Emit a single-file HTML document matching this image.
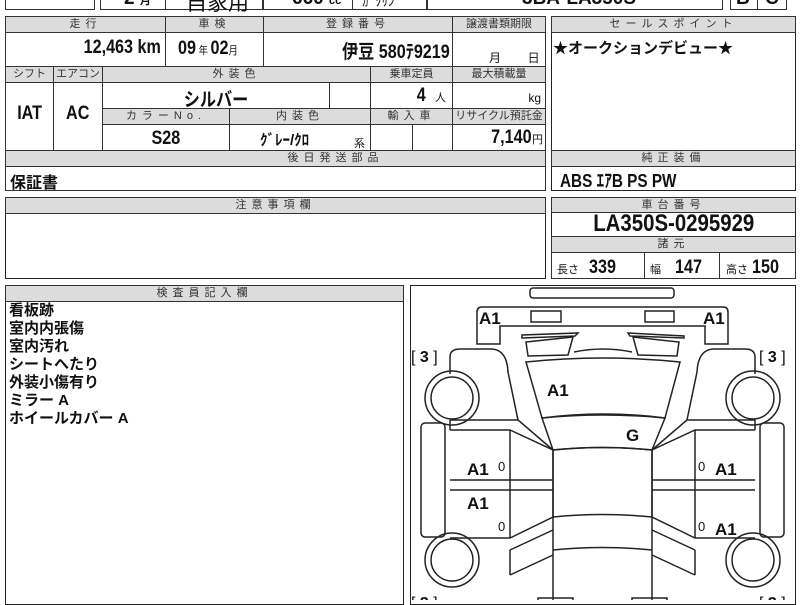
<!DOCTYPE html>
<html><head><meta charset="utf-8"><style>
*{margin:0;padding:0;box-sizing:border-box}
body{width:800px;height:600px;background:#fff;position:relative;overflow:hidden;font-family:"Liberation Sans","Noto Sans CJK JP",sans-serif;color:#111}
.b{position:absolute;border:1.5px solid #222;background:#fff}
.h{position:absolute;background:#dcdcdc;border:1px solid #333;font-size:11px;color:#333;text-align:center;letter-spacing:5px;line-height:15px;overflow:hidden;white-space:nowrap}
.c{position:absolute;border:1px solid #333;background:#fff;overflow:hidden;white-space:nowrap}
.v{font-weight:bold;font-size:19px;display:inline-block;transform:scaleX(.85)}
.s{font-size:11px}
</style></head><body>
<!-- top row -->
<div class="c" style="left:5px;top:-5px;width:90px;height:15px;border-width:1.5px"></div>
<div class="c" style="left:100px;top:-5px;width:66px;height:15px;border-width:1.5px"></div>
<div class="c" style="left:165px;top:-5px;width:98px;height:15px;border-width:1.5px"></div>
<div class="c" style="left:263px;top:-5px;width:90px;height:15px;border-width:1.5px"></div>
<div class="c" style="left:352px;top:-5px;width:75px;height:15px;border-width:1.5px"></div>
<div class="c" style="left:427px;top:-5px;width:296px;height:15px;border-width:1.5px"></div>
<div class="c" style="left:730px;top:-5px;width:28px;height:15px;border-width:1.5px"></div>
<div class="c" style="left:757px;top:-5px;width:30px;height:15px;border-width:1.5px"></div>
<div style="position:absolute;left:124px;top:-12px;font-weight:bold;font-size:19px">2 <span class="s">月</span></div>
<div style="position:absolute;left:186px;top:-13px;font-size:21px">自家用</div>
<div style="position:absolute;left:292px;top:-12px;font-weight:bold;font-size:19px">660 <span class="s">cc</span></div>
<div style="position:absolute;left:362px;top:-9px;font-size:13px">ｶﾞｿﾘﾝ</div>
<div style="position:absolute;left:522px;top:-12px;font-weight:bold;font-size:19px">3BA-LA350S</div>
<div style="position:absolute;left:736px;top:-12px;font-weight:bold;font-size:19px">B</div>
<div style="position:absolute;left:765px;top:-12px;font-weight:bold;font-size:19px">C</div>

<!-- main table -->
<div class="b" style="left:5px;top:16px;width:541px;height:175px"></div>
<div class="h" style="left:5px;top:16px;width:161px;height:17px">走行</div>
<div class="h" style="left:165px;top:16px;width:99px;height:17px">車検</div>
<div class="h" style="left:263px;top:16px;width:190px;height:17px">登録番号</div>
<div class="h" style="left:452px;top:16px;width:94px;height:17px;letter-spacing:0">譲渡書類期限</div>
<div class="c" style="left:5px;top:32px;width:161px;height:35px;text-align:right;padding-right:4px;padding-top:4px"><span class="v" style="transform-origin:right">12,463 km</span></div>
<div class="c" style="left:165px;top:32px;width:99px;height:35px;padding:5px 0 0 12px"><span class="v" style="transform-origin:left">09<span class="s" style="font-weight:normal"> 年 </span>02<span class="s" style="font-weight:normal">月</span></span></div>
<div class="c" style="left:263px;top:32px;width:190px;height:35px;text-align:right;padding:4px 2px 0 0"><span class="v" style="transform-origin:right">伊豆 580ﾃ9219</span></div>
<div class="c" style="left:452px;top:32px;width:94px;height:35px;font-size:12px;padding:16px 0 0 36px">月 &nbsp;&nbsp;&nbsp;&nbsp;&nbsp;&nbsp;&nbsp;日</div>

<div class="h" style="left:5px;top:66px;width:49px;height:17px;letter-spacing:0">シフト</div>
<div class="h" style="left:53px;top:66px;width:50px;height:17px;letter-spacing:0">エアコン</div>
<div class="h" style="left:102px;top:66px;width:269px;height:17px">外装色</div>
<div class="h" style="left:370px;top:66px;width:83px;height:17px;letter-spacing:0">乗車定員</div>
<div class="h" style="left:452px;top:66px;width:94px;height:17px;letter-spacing:0">最大積載量</div>
<div class="c" style="left:5px;top:82px;width:49px;height:69px;text-align:center;padding-top:20px"><span class="v">IAT</span></div>
<div class="c" style="left:53px;top:82px;width:50px;height:69px;text-align:center;padding-top:20px"><span class="v">AC</span></div>
<div class="c" style="left:102px;top:82px;width:228px;height:27px;text-align:center;padding-top:2px"><span class="v">シルバー</span></div>
<div class="c" style="left:329px;top:82px;width:42px;height:27px"></div>
<div class="c" style="left:370px;top:82px;width:83px;height:27px;text-align:right;padding:2px 6px 0 0"><span class="v">4</span> &nbsp;<span class="s">人</span></div>
<div class="c" style="left:452px;top:82px;width:94px;height:27px;text-align:right;padding:8px 4px 0 0;font-size:12px">kg</div>
<div class="h" style="left:102px;top:108px;width:128px;height:17px">カラーNo.</div>
<div class="h" style="left:229px;top:108px;width:142px;height:17px">内装色</div>
<div class="h" style="left:370px;top:108px;width:83px;height:17px">輸入車</div>
<div class="h" style="left:452px;top:108px;width:94px;height:17px;letter-spacing:0">リサイクル預託金</div>
<div class="c" style="left:102px;top:124px;width:128px;height:27px;text-align:center;padding-top:3px"><span class="v">S28</span></div>
<div class="c" style="left:229px;top:124px;width:142px;height:27px;padding:4px 0 0 30px;font-size:15px;font-weight:bold">ｸﾞﾚｰ/ｸﾛ <span style="font-size:11px;font-weight:normal;position:absolute;right:5px;top:10px">系</span></div>
<div class="c" style="left:370px;top:124px;width:43px;height:27px"></div>
<div class="c" style="left:412px;top:124px;width:41px;height:27px"></div>
<div class="c" style="left:452px;top:124px;width:94px;height:27px;text-align:right;padding:2px 2px 0 0"><span class="v" style="transform-origin:right">7,140</span><span class="s">円</span></div>
<div class="h" style="left:5px;top:150px;width:541px;height:17px;padding-left:120px">後日発送部品</div>
<div class="c" style="left:5px;top:166px;width:541px;height:25px;font-size:16px;font-weight:bold;padding:2px 4px">保証書</div>

<!-- sales point -->
<div class="b" style="left:551px;top:16px;width:245px;height:175px"></div>
<div class="h" style="left:551px;top:16px;width:245px;height:17px">セールスポイント</div>
<div style="position:absolute;left:553px;top:37px;font-size:15px;font-weight:bold">★オークションデビュー★</div>
<div class="h" style="left:551px;top:150px;width:245px;height:17px">純正装備</div>
<div style="position:absolute;left:560px;top:167px"><span class="v" style="transform-origin:left;font-size:18px">ABS ｴｱB PS PW</span></div>

<!-- 注意事項 -->
<div class="b" style="left:5px;top:197px;width:541px;height:82px"></div>
<div class="h" style="left:5px;top:197px;width:541px;height:17px">注意事項欄</div>

<!-- 車台番号 -->
<div class="b" style="left:551px;top:197px;width:245px;height:82px"></div>
<div class="h" style="left:551px;top:197px;width:245px;height:16px">車台番号</div>
<div style="position:absolute;left:551px;top:210px;width:245px;text-align:center"><span class="v" style="font-size:24px">LA350S-0295929</span></div>
<div class="h" style="left:551px;top:236px;width:245px;height:17px">諸元</div>
<div class="c" style="left:551px;top:252px;width:94px;height:27px;padding:4px 0 0 5px"><span class="s">長さ</span> <span class="v" style="transform-origin:left;margin-left:6px">339</span></div>
<div class="c" style="left:644px;top:252px;width:76px;height:27px;padding:4px 0 0 5px"><span class="s">幅</span> <span class="v" style="transform-origin:left;margin-left:10px">147</span></div>
<div class="c" style="left:719px;top:252px;width:77px;height:27px;padding:4px 0 0 6px"><span class="s">高さ</span> <span class="v" style="transform-origin:left">150</span></div>

<!-- 検査員 -->
<div class="b" style="left:5px;top:285px;width:399px;height:320px"></div>
<div class="h" style="left:5px;top:285px;width:399px;height:17px">検査員記入欄</div>
<div style="position:absolute;left:9px;top:302px;font-size:15px;font-weight:bold;line-height:18px">看板跡<br>室内内張傷<br>室内汚れ<br>シートへたり<br>外装小傷有り<br>ミラー A<br>ホイールカバー A</div>

<!-- diagram -->
<div class="b" style="left:410px;top:285px;width:386px;height:320px"></div>
<svg style="position:absolute;left:0;top:0" width="800" height="600" fill="none" stroke="#222" stroke-width="1.5">
<rect x="530" y="288" width="144" height="10" rx="3"/>
<path d="M477,344 L477,312 Q477,307 482,307 L723,307 Q728,307 728,312 L728,344 L705,344 L705,326 L500,326 L500,344 Z"/>
<rect x="531" y="311" width="30" height="11"/><rect x="645" y="311" width="29" height="11"/>
<path d="M522,335 L578,333 L575,336 L522,338 Z"/><path d="M628,333 L684,336 L684,338 L630,336 Z"/>
<path d="M526,342 L573,337 L568,355 L528,356 Z"/><path d="M633,337 L679,342 L677,356 L638,355 Z"/>
<path d="M574,352 Q603,346 632,352"/>
<path d="M526,362 Q603,354 680,362 L665,418 Q603,412 542,418 Z"/>
<path d="M542,418 Q603,410 665,418 L652,450 Q603,445 553,450 Z"/>
<path d="M553,450 Q603,445 652,450 L652,517 Q603,512 553,517 Z"/>
<!-- left side -->
<path d="M450,374 L450,357 Q450,349 460,349 L492,349 Q507,350 508,372 L518,420 L553,450"/>
<path d="M450,430 L510,430 L553,450 L553,517 L510,538 L450,538"/>
<path d="M510,430 L510,538"/><path d="M450,480 L553,480"/><path d="M450,490 L553,490"/>
<path d="M450,420 L450,430 M450,420 L518,420"/>
<rect x="421" y="423" width="24" height="114" rx="4"/>
<circle cx="452" cy="398" r="27"/><circle cx="452" cy="398" r="21"/>
<circle cx="452" cy="560" r="27"/><circle cx="452" cy="560" r="21"/>
<path d="M510,550 L553,530 M510,575 L553,555 M510,550 L510,575"/>
<!-- right side -->
<path d="M755,374 L755,357 Q755,349 745,349 L713,349 Q698,350 697,372 L687,420 L652,450"/>
<path d="M755,430 L695,430 L652,450 L652,517 L695,538 L755,538"/>
<path d="M695,430 L695,538"/><path d="M755,480 L652,480"/><path d="M755,490 L652,490"/>
<path d="M755,420 L755,430 M755,420 L687,420"/>
<rect x="760" y="423" width="24" height="114" rx="4"/>
<circle cx="753" cy="398" r="27"/><circle cx="753" cy="398" r="21"/>
<circle cx="753" cy="560" r="27"/><circle cx="753" cy="560" r="21"/>
<path d="M695,550 L652,530 M695,575 L652,555 M695,550 L695,575"/>
<path d="M553,517 L553,600 M652,517 L652,600 M553,550 Q603,545 652,550"/>
<rect x="538" y="598" width="35" height="10"/><rect x="632" y="598" width="35" height="10"/>
<g fill="#111" stroke="none" font-family="Liberation Sans,sans-serif" font-weight="bold" font-size="17">
<text x="479" y="324">A1</text><text x="703" y="324">A1</text>
<text x="547" y="396">A1</text><text x="626" y="441">G</text>
<text x="467" y="475">A1</text><text x="715" y="475">A1</text>
<text x="467" y="509">A1</text><text x="715" y="535">A1</text>
</g>
<g fill="#111" stroke="none" font-family="Liberation Sans,sans-serif" font-size="13">
<text x="498" y="471">0</text><text x="698" y="471">0</text>
<text x="498" y="531">0</text><text x="698" y="531">0</text>
</g>
<g fill="#111" stroke="none" font-family="Liberation Sans,sans-serif" font-size="16">
<text x="411" y="362">[ <tspan font-weight="bold">3</tspan> ]</text><text x="759" y="362">[ <tspan font-weight="bold">3</tspan> ]</text>
<text x="411" y="608">[ <tspan font-weight="bold">3</tspan> ]</text><text x="759" y="608">[ <tspan font-weight="bold">3</tspan> ]</text>
</g>
</svg>
</body></html>
